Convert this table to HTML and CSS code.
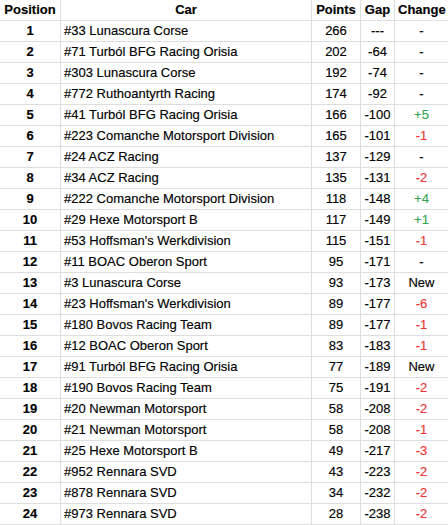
FILE: index.html
```html
<!DOCTYPE html>
<html>
<head>
<meta charset="utf-8">
<link rel="stylesheet" href="styles.css">
</head>
<body>
<table class="standings">
<thead>
<tr><th class="c-pos">Position</th><th class="c-car">Car</th><th class="c-pts">Points</th><th class="c-gap">Gap</th><th class="c-chg">Change</th></tr>
</thead>
<tbody>
<tr><td class="pos">1</td><td class="car">#33 Lunascura Corse</td><td class="num">266</td><td class="num">---</td><td class="num">-</td></tr>
<tr><td class="pos">2</td><td class="car">#71 Turból BFG Racing Orisia</td><td class="num">202</td><td class="num">-64</td><td class="num">-</td></tr>
<tr><td class="pos">3</td><td class="car">#303 Lunascura Corse</td><td class="num">192</td><td class="num">-74</td><td class="num">-</td></tr>
<tr><td class="pos">4</td><td class="car">#772 Ruthoantyrth Racing</td><td class="num">174</td><td class="num">-92</td><td class="num">-</td></tr>
<tr><td class="pos">5</td><td class="car">#41 Turból BFG Racing Orisia</td><td class="num">166</td><td class="num">-100</td><td class="num up">+5</td></tr>
<tr><td class="pos">6</td><td class="car">#223 Comanche Motorsport Division</td><td class="num">165</td><td class="num">-101</td><td class="num down">-1</td></tr>
<tr><td class="pos">7</td><td class="car">#24 ACZ Racing</td><td class="num">137</td><td class="num">-129</td><td class="num">-</td></tr>
<tr><td class="pos">8</td><td class="car">#34 ACZ Racing</td><td class="num">135</td><td class="num">-131</td><td class="num down">-2</td></tr>
<tr><td class="pos">9</td><td class="car">#222 Comanche Motorsport Division</td><td class="num">118</td><td class="num">-148</td><td class="num up">+4</td></tr>
<tr><td class="pos">10</td><td class="car">#29 Hexe Motorsport B</td><td class="num">117</td><td class="num">-149</td><td class="num up">+1</td></tr>
<tr><td class="pos">11</td><td class="car">#53 Hoffsman's Werkdivision</td><td class="num">115</td><td class="num">-151</td><td class="num down">-1</td></tr>
<tr><td class="pos">12</td><td class="car">#11 BOAC Oberon Sport</td><td class="num">95</td><td class="num">-171</td><td class="num">-</td></tr>
<tr><td class="pos">13</td><td class="car">#3 Lunascura Corse</td><td class="num">93</td><td class="num">-173</td><td class="num">New</td></tr>
<tr><td class="pos">14</td><td class="car">#23 Hoffsman's Werkdivision</td><td class="num">89</td><td class="num">-177</td><td class="num down">-6</td></tr>
<tr><td class="pos">15</td><td class="car">#180 Bovos Racing Team</td><td class="num">89</td><td class="num">-177</td><td class="num down">-1</td></tr>
<tr><td class="pos">16</td><td class="car">#12 BOAC Oberon Sport</td><td class="num">83</td><td class="num">-183</td><td class="num down">-1</td></tr>
<tr><td class="pos">17</td><td class="car">#91 Turból BFG Racing Orisia</td><td class="num">77</td><td class="num">-189</td><td class="num">New</td></tr>
<tr><td class="pos">18</td><td class="car">#190 Bovos Racing Team</td><td class="num">75</td><td class="num">-191</td><td class="num down">-2</td></tr>
<tr><td class="pos">19</td><td class="car">#20 Newman Motorsport</td><td class="num">58</td><td class="num">-208</td><td class="num down">-2</td></tr>
<tr><td class="pos">20</td><td class="car">#21 Newman Motorsport</td><td class="num">58</td><td class="num">-208</td><td class="num down">-1</td></tr>
<tr><td class="pos">21</td><td class="car">#25 Hexe Motorsport B</td><td class="num">49</td><td class="num">-217</td><td class="num down">-3</td></tr>
<tr><td class="pos">22</td><td class="car">#952 Rennara SVD</td><td class="num">43</td><td class="num">-223</td><td class="num down">-2</td></tr>
<tr><td class="pos">23</td><td class="car">#878 Rennara SVD</td><td class="num">34</td><td class="num">-232</td><td class="num down">-2</td></tr>
<tr><td class="pos">24</td><td class="car">#973 Rennara SVD</td><td class="num">28</td><td class="num">-238</td><td class="num down">-2</td></tr>
</tbody>
</table>
</body>
</html>
```
FILE: styles.css
```css
html, body {
  margin: 0;
  padding: 0;
  background: #ffffff;
}
body {
  font-family: "Liberation Sans", Arial, sans-serif;
  font-size: 13px;
  color: #000000;
}
.standings {
  width: 448px;
  table-layout: fixed;
  border-collapse: separate;
  border-spacing: 0;
}
.standings th,
.standings td {
  box-sizing: border-box;
  height: 21px;
  padding: 0 3px;
  border-bottom: 1px solid #dedede;
  border-left: 1px solid #dedede;
  line-height: 20px;
  white-space: nowrap;
  overflow: hidden;
  vertical-align: middle;
  -webkit-text-stroke: 0.15px currentColor;
}
.standings th:first-child,
.standings td:first-child {
  border-left: none;
}
.standings th {
  font-weight: bold;
  text-align: center;
}
.c-pos { width: 60px; }
.c-car { width: 251px; }
.c-pts { width: 49px; }
.c-gap { width: 34px; }
.c-chg { width: 54px; }
.pos {
  font-weight: bold;
  text-align: center;
}
.car {
  text-align: left;
}
.num {
  text-align: center;
}
.up {
  color: #33a650;
}
.down {
  color: #ef3535;
}
```
